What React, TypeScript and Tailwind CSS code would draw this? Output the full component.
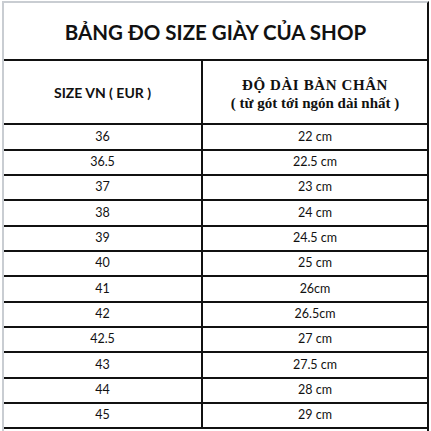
const rows: [string, string][] = [
  ['36', '22 cm'],
  ['36.5', '22.5 cm'],
  ['37', '23 cm'],
  ['38', '24 cm'],
  ['39', '24.5 cm'],
  ['40', '25 cm'],
  ['41', '26cm'],
  ['42', '26.5cm'],
  ['42.5', '27 cm'],
  ['43', '27.5 cm'],
  ['44', '28 cm'],
  ['45', '29 cm'],
]

export default function App() {
  return (
    <div className="h-[431px] w-[431px] overflow-hidden bg-white pl-[2px] pt-px font-['Lato',sans-serif] text-[#111]">
      <div className="flex h-[430px] w-[427px] flex-col border-l-2 border-r-2 border-t-2 border-l-[#c9cdd2] border-r-[#111] border-t-[#c9cdd2]">
        <div className="flex h-[58px] shrink-0 items-center justify-center border-b-2 border-[#111] pt-[2px] text-[20.5px] font-bold">
          BẢNG ĐO SIZE GIÀY CỦA SHOP
        </div>
        <div className="grid h-[64px] shrink-0 grid-cols-[199px_1fr] border-b-2 border-[#111]">
          <div className="flex items-center justify-center border-r-2 border-[#111] text-[14px] font-bold">
            SIZE VN ( EUR )
          </div>
          <div className="flex flex-col items-center justify-center pt-[3px] font-['Liberation_Serif',serif] text-[15px] font-bold leading-[18px]">
            <span className="tracking-[0.6px]">ĐỘ DÀI BÀN CHÂN</span>
            <span>( từ gót tới ngón dài nhất )</span>
          </div>
        </div>
        {rows.map(([size, len], i) => (
          <div
            key={size}
            className={`grid shrink-0 grid-cols-[199px_1fr] border-b-2 border-[#111] text-[12.5px] ${i % 3 === 0 ? 'h-[26px]' : 'h-[25px]'}`}
          >
            <div className="flex items-center justify-center border-r-2 border-[#111]">{size}</div>
            <div className="flex items-center justify-center">{len}</div>
          </div>
        ))}
      </div>
    </div>
  )
}
